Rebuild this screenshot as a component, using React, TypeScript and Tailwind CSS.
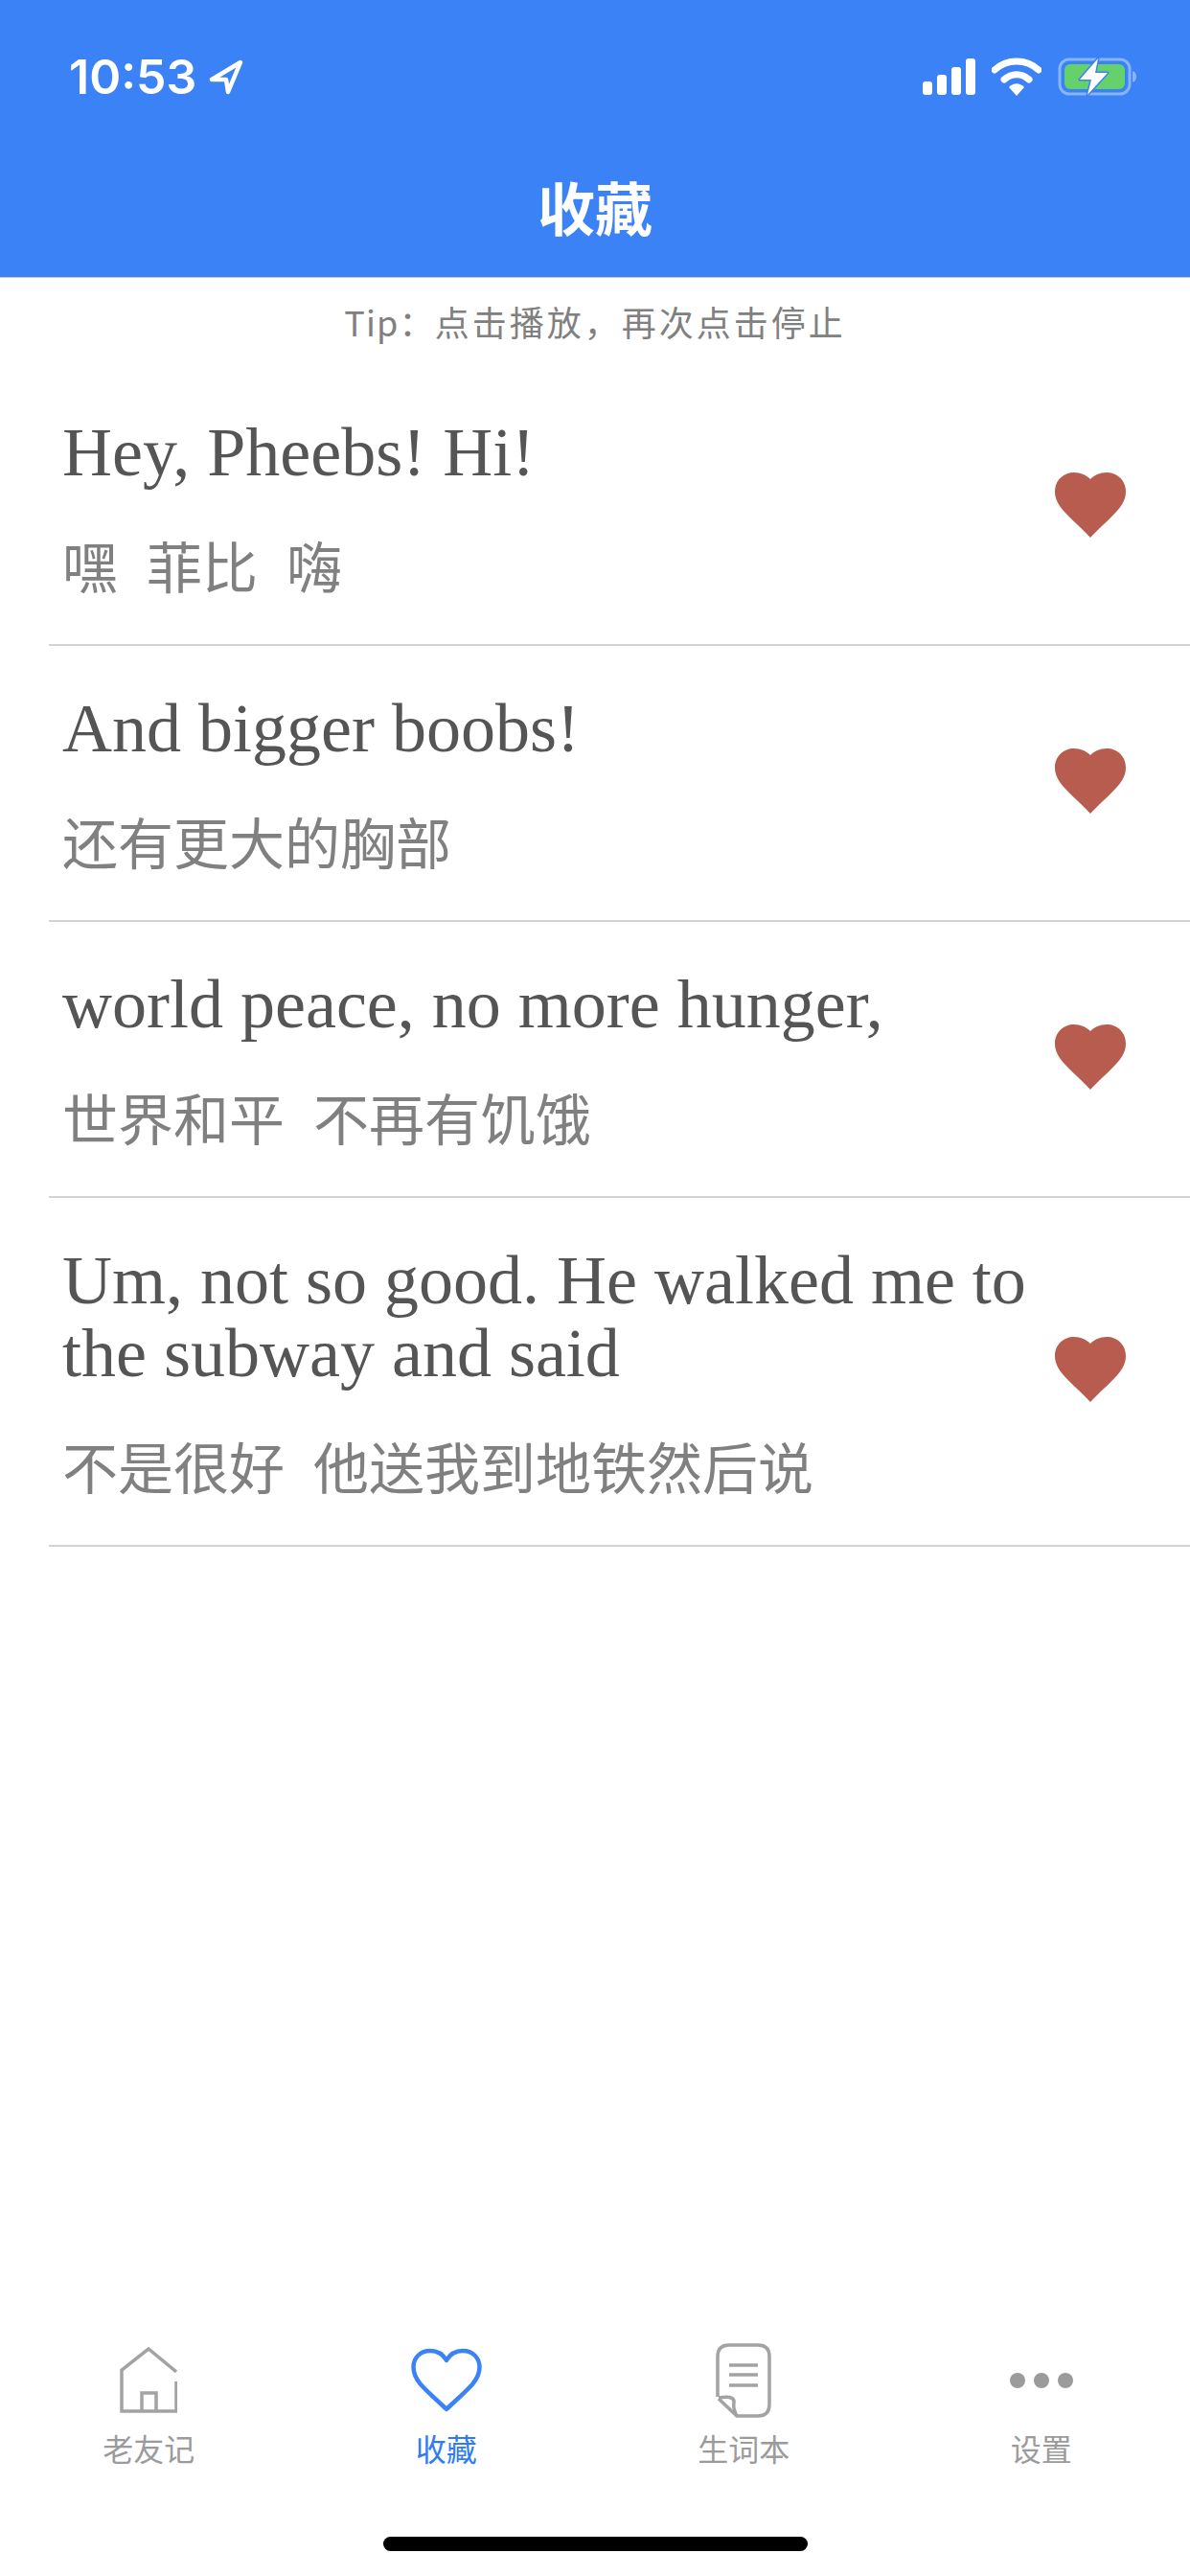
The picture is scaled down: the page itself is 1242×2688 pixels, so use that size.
import React from 'react';

const cjk = '"Noto Sans CJK SC", sans-serif';

const items = [
  { en: ['Hey, Pheebs! Hi!'], zh: '嘿  菲比  嗨' },
  { en: ['And bigger boobs!'], zh: '还有更大的胸部' },
  { en: ['world peace, no more hunger,'], zh: '世界和平  不再有饥饿' },
  { en: ['Um, not so good. He walked me to', 'the subway and said'], zh: '不是很好  他送我到地铁然后说' },
];

function Heart() {
  return (
    <svg viewBox="0 0 74 68" className="w-[74px] h-[68px] shrink-0 mb-[10px]">
      <path d="M37 68 C30 60 18 50 9 40 C3 33 0 27 0 20 C0 8 9 0 20 0 C27 0 33 3 37 7 C41 3 47 0 54 0 C65 0 74 8 74 20 C74 27 71 33 65 40 C56 50 44 60 37 68 Z" fill="#b85c50" />
    </svg>
  );
}

function StatusBar() {
  return (
    <div className="h-[124px] flex items-end justify-between pl-[72px] pr-[56px] pb-[16px]">
      <div className="flex items-center gap-[12px]">
        <span className="text-[50px] leading-[56px] font-semibold text-white font-['Inter',sans-serif]">10:53</span>
        <svg viewBox="0 0 38 38" className="w-[38px] h-[38px]">
          <path d="M34 4 L4 22 L19 22 L21 35 Z" fill="none" stroke="#fff" strokeWidth="4.5" strokeLinejoin="round" />
        </svg>
      </div>
      <div className="flex items-center gap-[17px] pb-[8px]">
        <svg viewBox="0 0 55 38" className="w-[55px] h-[38px]" fill="#fff">
          <rect x="0" y="24" width="10" height="14" rx="3" />
          <rect x="15" y="17" width="10" height="21" rx="3" />
          <rect x="30" y="9" width="10" height="29" rx="3" />
          <rect x="45" y="0" width="10" height="38" rx="3" />
        </svg>
        <svg viewBox="0 0 52 40" className="w-[52px] h-[40px]">
          <path d="M3 13 C16 1 36 1 49 13" fill="none" stroke="#fff" strokeWidth="7" strokeLinecap="round" />
          <path d="M13 23 C21 16 31 16 39 23" fill="none" stroke="#fff" strokeWidth="7" strokeLinecap="round" />
          <path d="M18 31 C23 26 29 26 34 31 L26 40 Z" fill="#fff" />
        </svg>
        <svg viewBox="0 0 82 40" className="w-[82px] h-[40px]">
          <rect x="2" y="2" width="73" height="36" rx="10" fill="none" stroke="#fff" strokeOpacity="0.4" strokeWidth="3" />
          <path d="M78 14 C81 15 82 17 82 20 C82 23 81 25 78 26 Z" fill="#fff" fillOpacity="0.4" />
          <rect x="7" y="7" width="63" height="26" rx="6" fill="#65d16a" />
          <path d="M42 1 L23 23 L35 23 L31 39 L52 16 L39 16 Z" fill="#fff" stroke="#3b82f6" strokeWidth="3" strokeLinejoin="round" paintOrder="stroke" />
        </svg>
      </div>
    </div>
  );
}

function HomeIcon() {
  return (
    <svg viewBox="0 0 60 70" className="w-[60px] h-[70px]" fill="none" stroke="#a3a3a3" strokeWidth="3.500">
      <path d="M59 26 L30 2 L2 24 V67 H59 V36" />
      <path d="M23 67 V48 H38 V67" />
    </svg>
  );
}

function HeartOutline() {
  return (
    <svg viewBox="0 0 74 68" className="w-[74px] h-[68px]">
      <path d="M37 64 C30 57 19 48 10 38 C5 32 2.500 27 2.500 20 C2.500 10 10 3 20 3 C27 3 33 6 37 13 C41 6 47 3 54 3 C64 3 71.500 10 71.500 20 C71.500 27 69 32 64 38 C55 48 44 57 37 64 Z" fill="none" stroke="#3b82f6" strokeWidth="4.500" strokeLinejoin="round" />
    </svg>
  );
}

function DocIcon() {
  return (
    <svg viewBox="0 0 58 78" className="w-[58px] h-[78px]" fill="none" stroke="#a3a3a3" strokeWidth="3.500">
      <path d="M2 56 V14 C2 6 6 2 14 2 H44 C52 2 56 6 56 14 V64 C56 72 52 76 44 76 H22 L3 58" />
      <path d="M3 57 C10 56 20 55 19 62 C18 66 20 72 22 76" />
      <path d="M14 23 H44 M14 33 H44 M14 44 H44" />
    </svg>
  );
}

function DotsIcon() {
  return (
    <div className="flex items-center gap-[9px] h-[70px]">
      <div className="w-[16px] h-[16px] rounded-full bg-[#9b9b9b]" />
      <div className="w-[16px] h-[16px] rounded-full bg-[#9b9b9b]" />
      <div className="w-[16px] h-[16px] rounded-full bg-[#9b9b9b]" />
    </div>
  );
}

const tabs = [
  { label: '老友记', icon: <HomeIcon />, active: false },
  { label: '收藏', icon: <HeartOutline />, active: true },
  { label: '生词本', icon: <DocIcon />, active: false },
  { label: '设置', icon: <DotsIcon />, active: false },
];

export default function App() {
  return (
    <div className="w-[1242px] h-[2688px] bg-white flex flex-col" style={{ fontFamily: cjk }}>
      <div className="bg-[#3b82f6] h-[290px] border-b border-[#c9c9c9]">
        <StatusBar />
        <div className="text-center text-white text-[60px] leading-[84px] font-semibold mt-[49px]">收藏</div>
      </div>

      <div className="text-center text-[36px] leading-[50px] h-[96px] pt-[20px] text-[#808080] tracking-[3px]">
        <span className="tracking-[1.200px]">Tip：</span>点击播放，再次点击停止
      </div>

      <div className="flex-1 pl-[51px]">
        {items.map((item) => (
          <div key={item.zh} className="flex items-center border-b-2 border-[#d4d4d4] pl-[14px] pr-[67px] pt-[48px] pb-[43px]">
            <div className="flex-1">
              <div className="text-[#555555] text-[72px] leading-[76px] font-['Liberation_Serif',serif]">
                {item.en.map((line) => (
                  <div key={line}>{line}</div>
                ))}
              </div>
              <div className="text-[#808080] text-[58px] leading-[80px] mt-[39px] whitespace-pre [word-spacing:2px]">{item.zh}</div>
            </div>
            <Heart />
          </div>
        ))}
      </div>

      <div className="grid grid-cols-4 h-[135px] pt-[2px]">
        {tabs.map((tab) => (
          <div key={tab.label} className="flex flex-col items-center">
            <div className="h-[80px] flex items-center justify-center">{tab.icon}</div>
            <div className={`text-[32px] leading-[44px] mt-[8px] ${tab.active ? 'text-[#2f7bf6]' : 'text-[#9b9b9b]'}`}>{tab.label}</div>
          </div>
        ))}
      </div>

      <div className="h-[111px] flex items-end justify-center pb-[26px]">
        <div className="w-[443px] h-[15px] rounded-full bg-black" />
      </div>
    </div>
  );
}
